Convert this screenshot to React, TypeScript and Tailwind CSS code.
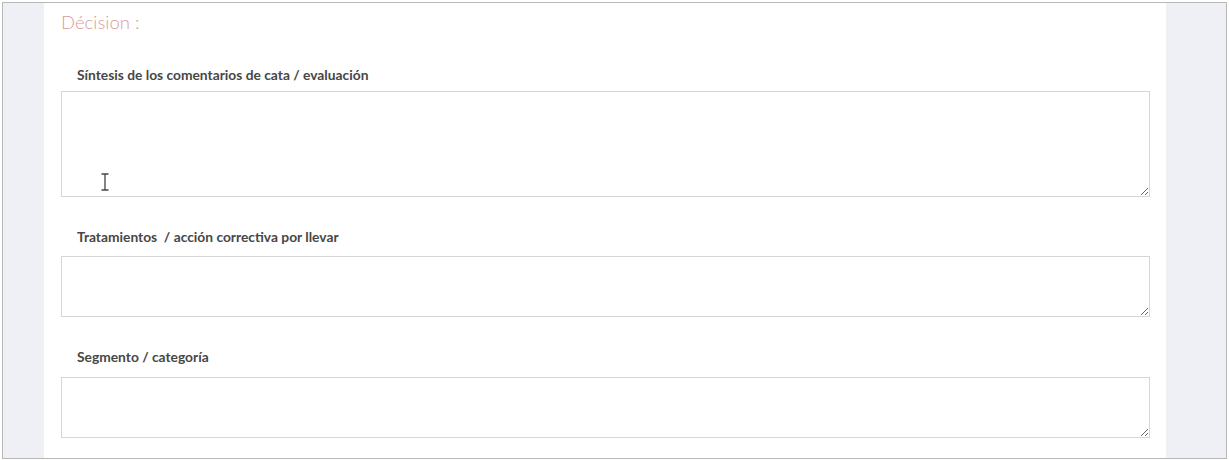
const fields = [
  { label: "Síntesis de los comentarios de cata / evaluación", h: "h-[106px]", mt: "mt-[33px]", gap: "mt-[8px]" },
  { label: "Tratamientos  / acción correctiva por llevar", h: "h-[61px]", mt: "mt-[31px]", gap: "mt-[11px]" },
  { label: "Segmento / categoría", h: "h-[61px]", mt: "mt-[31px]", gap: "mt-[12px]" },
];

const App = (): JSX.Element => {
  return (
    <div className="w-[1229px] h-[460px] bg-white pt-[2px] pl-[2px]">
      <div className="w-[1225px] h-[457px] border border-[#b8b8b8] flex bg-[#eef0f5]">
        <div className="w-[41px]" />
        <div className="w-[1122px] bg-white pl-[17px] pt-[8px] font-['Lato',sans-serif]">
          <h2 className="text-[18.5px] leading-[22px] font-light text-[#d99c92]">
            Décision :
          </h2>
          {fields.map((f, i) => (
            <div key={i} className={f.mt}>
              <p className="pl-[16px] text-[13.8px] leading-[17px] font-bold text-[#474747] whitespace-pre">
                {f.label}
              </p>
              <div className={`relative ${f.gap}`}>
                <textarea
                  className={`block w-[1089px] ${f.h} border border-[#d6d6d6] bg-white resize-y outline-none`}
                />
                {i === 0 && (
                  <svg
                    className="absolute left-[39px] top-[82px]"
                    width="10"
                    height="18"
                    viewBox="0 0 10 18"
                  >
                    <path
                      d="M1.5 1h7M5 1v16M1.5 17h7"
                      stroke="#444"
                      strokeWidth="1.3"
                      fill="none"
                    />
                  </svg>
                )}
              </div>
            </div>
          ))}
        </div>
        <div className="flex-1" />
      </div>
    </div>
  );
};

export default App;
